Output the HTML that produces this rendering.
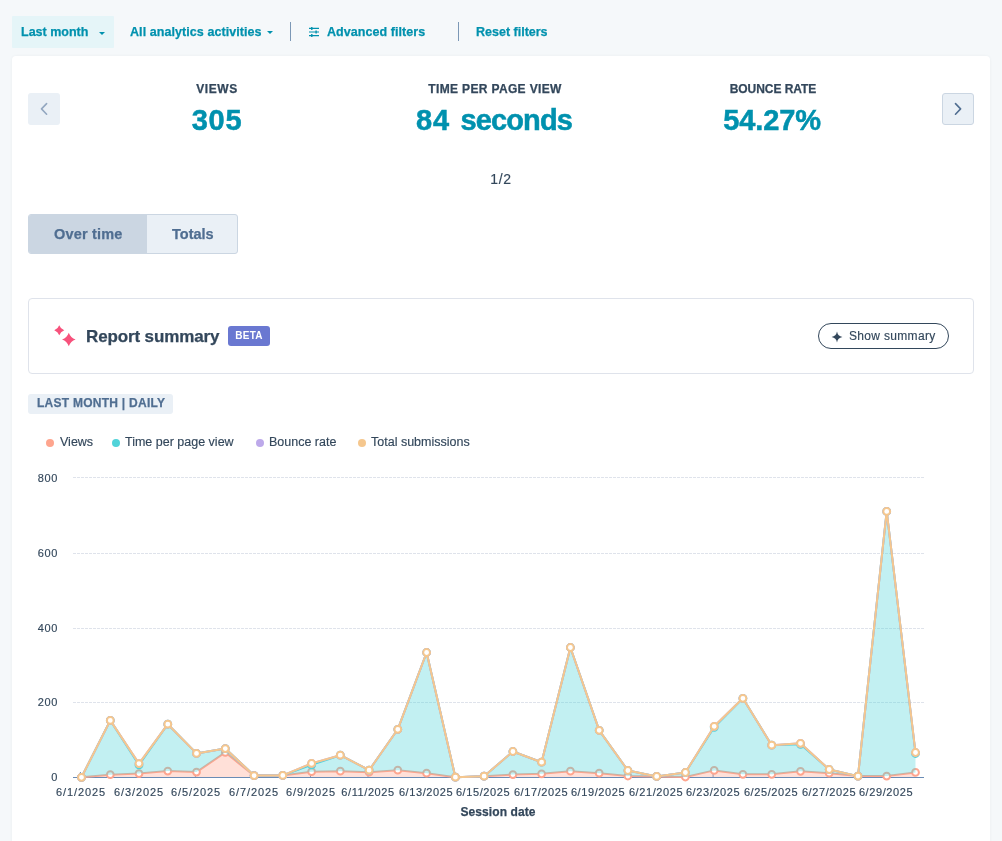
<!DOCTYPE html>
<html><head><meta charset="utf-8"><title>Analytics</title>
<style>
*{box-sizing:border-box;margin:0;padding:0}
html,body{width:1002px;height:841px;overflow:hidden;background:#f5f8fa;font-family:"Liberation Sans",sans-serif;color:#33475b}
.abs{position:absolute;white-space:nowrap}
.abs,.tb,.kl,.kv,.tabt,.beta,.lg,.yl,.xl{will-change:transform}
.tb,.kl,.tabt,#rst,#tagt,#sd{-webkit-text-stroke:.25px currentColor}
.lg,.yl,.xl,#sst,#pg{-webkit-text-stroke:.15px currentColor}
.card{position:absolute;left:12px;top:56px;width:978px;height:800px;background:#fff;border-radius:4px 4px 0 0;box-shadow:0 0 3px rgba(45,62,80,.06)}
.tb{position:absolute;top:22px;height:20px;line-height:20px;font-size:12.5px;font-weight:bold;color:#0091ae;white-space:nowrap}
.lastm{position:absolute;left:12px;top:16px;width:102px;height:32px;background:#e5f5f8;border-radius:1px}
.caret{position:absolute;width:0;height:0;border-left:3.2px solid transparent;border-right:3.2px solid transparent;border-top:3.4px solid #0091ae}
.div{position:absolute;top:22px;width:1px;height:19px;background:#7c98b6}
.kl{position:absolute;top:80px;height:18px;line-height:18px;font-size:12px;font-weight:bold;color:#33475b;text-align:center;width:278px;white-space:nowrap}
.kv{position:absolute;top:99.8px;-webkit-text-stroke:.5px #0091ae;height:40px;line-height:40px;font-size:29px;font-weight:bold;color:#0091ae;text-align:center;width:278px;white-space:nowrap}
.nav{position:absolute;top:93px;width:32px;height:32px;border-radius:3px;background:#eaf0f6}
.tabs{position:absolute;left:28px;top:214px;width:210px;height:40px;border:1px solid #cbd6e2;border-radius:3px;background:#eaf0f6;overflow:hidden}
.tabs .a{position:absolute;left:0;top:0;width:118px;height:38px;background:#cbd6e2}
.tabt{position:absolute;top:224px;height:20px;line-height:20px;font-size:14.5px;font-weight:bold;color:#506e91;white-space:nowrap}
.rs{position:absolute;left:28px;top:298px;width:946px;height:76px;border:1px solid #dfe3eb;border-radius:4px;background:#fff}
.beta{position:absolute;left:228px;top:326px;width:42px;height:20px;border-radius:3px;background:#6a78d1;color:#fff;font-size:10px;font-weight:bold;line-height:20px;text-align:center;letter-spacing:.2px}
.showb{position:absolute;left:818px;top:323px;width:131px;height:26px;border:1px solid #33475b;border-radius:13px;background:#fff}
.tag{position:absolute;left:28px;top:393.5px;width:145px;height:20px;border-radius:3px;background:#eaf0f6}
.lg{position:absolute;top:433px;height:18px;line-height:18px;font-size:12.5px;color:#33475b;white-space:nowrap}
.dot{position:absolute;top:439px;width:8px;height:8px;border-radius:50%}
.yl{position:absolute;left:18.3px;width:40px;height:16px;line-height:16px;text-align:right;font-size:11px;letter-spacing:.6px;color:#33475b}
.xl{position:absolute;top:784px;width:80px;height:16px;line-height:16px;text-align:center;font-size:11px;letter-spacing:.5px;color:#33475b;white-space:nowrap}
.chart{position:absolute;left:0;top:0}
</style></head><body>
<div class="lastm"></div>
<div class="tb" id="t1" style="left:21px">Last month</div>
<div class="caret" style="left:98.8px;top:31.8px"></div>
<div class="tb" id="t2" style="left:130.4px;letter-spacing:.07px">All analytics activities</div>
<div class="caret" style="left:266.8px;top:31px"></div>
<div class="div" style="left:290px"></div>
<svg class="abs" style="left:308px;top:26px" width="12" height="12" viewBox="0 0 12 12"><g stroke="#0091ae" stroke-width="1.2" fill="none"><path d="M1 2.4H11M1 6H11M1 9.6H11"/><path d="M3.8 0.9V3.9M8.1 4.5V7.5M3.8 8.1V11.1" stroke-width="1.4"/></g></svg>
<div class="tb" id="t3" style="left:326.6px;letter-spacing:.06px">Advanced filters</div>
<div class="div" style="left:458px"></div>
<div class="tb" id="t4" style="left:475.7px">Reset filters</div>

<div class="card"></div>

<div class="nav" style="left:28px"></div>
<svg class="abs" style="left:28px;top:93px" width="32" height="32" viewBox="0 0 32 32"><path d="M18.6 10.6L13.5 15.9L18.6 21.2" fill="none" stroke="#93a7c0" stroke-width="1.6" stroke-linecap="round" stroke-linejoin="round"/></svg>
<div class="nav" style="left:942px;border:1px solid #cbd6e2"></div>
<svg class="abs" style="left:942px;top:93px" width="32" height="32" viewBox="0 0 32 32"><path d="M13.5 10.6L18.6 15.9L13.5 21.2" fill="none" stroke="#506e91" stroke-width="1.6" stroke-linecap="round" stroke-linejoin="round"/></svg>

<div class="kl" id="k1" style="left:78.2px;letter-spacing:.55px">VIEWS</div>
<div class="kv" id="v1" style="left:77.9px;letter-spacing:.65px">305</div>
<div class="kl" id="k2" style="left:356.2px;letter-spacing:.35px">TIME PER PAGE VIEW</div>
<div class="kv" id="v2" style="left:355.4px;letter-spacing:0;word-spacing:2.6px"><span id="v2a" style="letter-spacing:.8px">84</span> <span id="v2b" style="letter-spacing:-.9px">seconds</span></div>
<div class="kl" id="k3" style="left:634.3px;letter-spacing:-.05px">BOUNCE RATE</div>
<div class="kv" id="v3" style="left:632.8px;letter-spacing:-.12px">54.27%</div>
<div class="abs" id="pg" style="left:461px;width:80px;text-align:center;top:169px;height:20px;line-height:20px;font-size:14px;letter-spacing:.6px;color:#33475b">1/2</div>

<div class="tabs"><div class="a"></div></div>
<div class="tabt" id="tb1" style="left:53.5px;letter-spacing:.17px">Over time</div>
<div class="tabt" id="tb2" style="left:171.5px">Totals</div>

<div class="rs"></div>
<svg class="abs" style="left:52px;top:322px" width="28" height="28" viewBox="0 0 28 28"><g fill="#f7527c"><path d="M7.25 3.3000000000000007 Q8.55 7.000000000000001 12.25 8.3 Q8.55 9.600000000000001 7.25 13.3 Q5.95 9.600000000000001 2.25 8.3 Q5.95 7.000000000000001 7.25 3.3000000000000007Z"/><path d="M16.8 10.7 Q18.6 15.7 23.6 17.5 Q18.6 19.3 16.8 24.3 Q15.0 19.3 10.0 17.5 Q15.0 15.7 16.8 10.7Z"/></g></svg>
<div class="abs" id="rst" style="left:85.7px;top:325px;height:24px;line-height:24px;font-size:17px;letter-spacing:-.13px;font-weight:bold;color:#33475b">Report summary</div>
<div class="beta">BETA</div>
<div class="showb"></div>
<svg class="abs" style="left:831px;top:331px" width="12" height="12" viewBox="0 0 12 12"><path d="M6 0.6 Q6.8 5.2 11.4 6 Q6.8 6.8 6 11.4 Q5.2 6.8 0.6 6 Q5.2 5.2 6 0.6Z" fill="#33475b"/></svg>
<div class="abs" id="sst" style="left:848.7px;top:327px;height:18px;line-height:18px;font-size:12px;letter-spacing:.32px;color:#33475b">Show summary</div>

<div class="tag"></div>
<div class="abs" id="tagt" style="left:36.5px;top:394px;height:18px;line-height:18px;font-size:12px;letter-spacing:.26px;font-weight:bold;color:#506e91">LAST MONTH | DAILY</div>

<div class="dot" style="left:46px;background:#fea58e"></div><div class="lg" id="l1" style="left:59.5px">Views</div>
<div class="dot" style="left:112px;background:#51d3d9"></div><div class="lg" id="l2" style="left:125px">Time per page view</div>
<div class="dot" style="left:255.5px;background:#bda9ea"></div><div class="lg" id="l3" style="left:269px">Bounce rate</div>
<div class="dot" style="left:357.7px;background:#f5c78e"></div><div class="lg" id="l4" style="left:370.5px">Total submissions</div>

<svg class="chart" width="1002" height="841" viewBox="0 0 1002 841">
<line x1="73" x2="924" y1="477.5" y2="477.5" stroke="#dfe3eb" stroke-width="1" stroke-dasharray="3,1"/>
<line x1="73" x2="924" y1="553.5" y2="553.5" stroke="#dfe3eb" stroke-width="1" stroke-dasharray="3,1"/>
<line x1="73" x2="924" y1="628.5" y2="628.5" stroke="#dfe3eb" stroke-width="1" stroke-dasharray="3,1"/>
<line x1="73" x2="924" y1="702.5" y2="702.5" stroke="#dfe3eb" stroke-width="1" stroke-dasharray="3,1"/>
<line x1="80.4" x2="80.4" y1="772" y2="777.5" stroke="#6a8cb5" stroke-width="1"/>
<line x1="137.9" x2="137.9" y1="772" y2="777.5" stroke="#6a8cb5" stroke-width="1"/>
<line x1="195.4" x2="195.4" y1="772" y2="777.5" stroke="#6a8cb5" stroke-width="1"/>
<line x1="253.0" x2="253.0" y1="772" y2="777.5" stroke="#6a8cb5" stroke-width="1"/>
<line x1="310.5" x2="310.5" y1="772" y2="777.5" stroke="#6a8cb5" stroke-width="1"/>
<line x1="368.0" x2="368.0" y1="772" y2="777.5" stroke="#6a8cb5" stroke-width="1"/>
<line x1="425.5" x2="425.5" y1="772" y2="777.5" stroke="#6a8cb5" stroke-width="1"/>
<line x1="483.0" x2="483.0" y1="772" y2="777.5" stroke="#6a8cb5" stroke-width="1"/>
<line x1="540.5" x2="540.5" y1="772" y2="777.5" stroke="#6a8cb5" stroke-width="1"/>
<line x1="598.1" x2="598.1" y1="772" y2="777.5" stroke="#6a8cb5" stroke-width="1"/>
<line x1="655.6" x2="655.6" y1="772" y2="777.5" stroke="#6a8cb5" stroke-width="1"/>
<line x1="713.1" x2="713.1" y1="772" y2="777.5" stroke="#6a8cb5" stroke-width="1"/>
<line x1="770.6" x2="770.6" y1="772" y2="777.5" stroke="#6a8cb5" stroke-width="1"/>
<line x1="828.1" x2="828.1" y1="772" y2="777.5" stroke="#6a8cb5" stroke-width="1"/>
<line x1="885.6" x2="885.6" y1="772" y2="777.5" stroke="#6a8cb5" stroke-width="1"/>
<line x1="73" x2="924" y1="777.5" y2="777.5" stroke="#6a8cb5" stroke-width="1"/>
<polygon points="81.5,777.3 110.3,774.7 139.0,773.6 167.8,771.1 196.5,772.1 225.3,752.4 254.1,775.6 282.8,775.4 311.6,771.7 340.3,771.2 369.1,772.2 397.8,770.2 426.6,773.2 455.4,777.2 484.1,776.2 512.9,774.6 541.6,773.8 570.4,771.2 599.2,773.2 627.9,776.0 656.7,776.4 685.4,777.0 714.2,770.4 742.9,774.3 771.7,774.3 800.5,771.3 829.2,773.2 858.0,776.1 886.7,776.1 915.5,772.4 915.5,777.0 886.7,777.0 858.0,777.0 829.2,777.0 800.5,777.0 771.7,777.0 742.9,777.0 714.2,777.0 685.4,777.0 656.7,777.0 627.9,777.0 599.2,777.0 570.4,777.0 541.6,777.0 512.9,777.0 484.1,777.0 455.4,777.0 426.6,777.0 397.8,777.0 369.1,777.0 340.3,777.0 311.6,777.0 282.8,777.0 254.1,777.0 225.3,777.0 196.5,777.0 167.8,777.0 139.0,777.0 110.3,777.0 81.5,777.0" fill="#fea58e" fill-opacity="0.35"/>
<polyline points="81.5,777.3 110.3,774.7 139.0,773.6 167.8,771.1 196.5,772.1 225.3,752.4 254.1,775.6 282.8,775.4 311.6,771.7 340.3,771.2 369.1,772.2 397.8,770.2 426.6,773.2 455.4,777.2 484.1,776.2 512.9,774.6 541.6,773.8 570.4,771.2 599.2,773.2 627.9,776.0 656.7,776.4 685.4,777.0 714.2,770.4 742.9,774.3 771.7,774.3 800.5,771.3 829.2,773.2 858.0,776.1 886.7,776.1 915.5,772.4" fill="none" stroke="#fea58e" stroke-width="2" stroke-linejoin="round" stroke-linecap="round"/>
<circle cx="81.5" cy="777.3" r="3.4" fill="#fff" stroke="#fea58e" stroke-width="2"/><circle cx="110.3" cy="774.7" r="3.4" fill="#fff" stroke="#fea58e" stroke-width="2"/><circle cx="139.0" cy="773.6" r="3.4" fill="#fff" stroke="#fea58e" stroke-width="2"/><circle cx="167.8" cy="771.1" r="3.4" fill="#fff" stroke="#fea58e" stroke-width="2"/><circle cx="196.5" cy="772.1" r="3.4" fill="#fff" stroke="#fea58e" stroke-width="2"/><circle cx="225.3" cy="752.4" r="3.4" fill="#fff" stroke="#fea58e" stroke-width="2"/><circle cx="254.1" cy="775.6" r="3.4" fill="#fff" stroke="#fea58e" stroke-width="2"/><circle cx="282.8" cy="775.4" r="3.4" fill="#fff" stroke="#fea58e" stroke-width="2"/><circle cx="311.6" cy="771.7" r="3.4" fill="#fff" stroke="#fea58e" stroke-width="2"/><circle cx="340.3" cy="771.2" r="3.4" fill="#fff" stroke="#fea58e" stroke-width="2"/><circle cx="369.1" cy="772.2" r="3.4" fill="#fff" stroke="#fea58e" stroke-width="2"/><circle cx="397.8" cy="770.2" r="3.4" fill="#fff" stroke="#fea58e" stroke-width="2"/><circle cx="426.6" cy="773.2" r="3.4" fill="#fff" stroke="#fea58e" stroke-width="2"/><circle cx="455.4" cy="777.2" r="3.4" fill="#fff" stroke="#fea58e" stroke-width="2"/><circle cx="484.1" cy="776.2" r="3.4" fill="#fff" stroke="#fea58e" stroke-width="2"/><circle cx="512.9" cy="774.6" r="3.4" fill="#fff" stroke="#fea58e" stroke-width="2"/><circle cx="541.6" cy="773.8" r="3.4" fill="#fff" stroke="#fea58e" stroke-width="2"/><circle cx="570.4" cy="771.2" r="3.4" fill="#fff" stroke="#fea58e" stroke-width="2"/><circle cx="599.2" cy="773.2" r="3.4" fill="#fff" stroke="#fea58e" stroke-width="2"/><circle cx="627.9" cy="776.0" r="3.4" fill="#fff" stroke="#fea58e" stroke-width="2"/><circle cx="656.7" cy="776.4" r="3.4" fill="#fff" stroke="#fea58e" stroke-width="2"/><circle cx="685.4" cy="777.0" r="3.4" fill="#fff" stroke="#fea58e" stroke-width="2"/><circle cx="714.2" cy="770.4" r="3.4" fill="#fff" stroke="#fea58e" stroke-width="2"/><circle cx="742.9" cy="774.3" r="3.4" fill="#fff" stroke="#fea58e" stroke-width="2"/><circle cx="771.7" cy="774.3" r="3.4" fill="#fff" stroke="#fea58e" stroke-width="2"/><circle cx="800.5" cy="771.3" r="3.4" fill="#fff" stroke="#fea58e" stroke-width="2"/><circle cx="829.2" cy="773.2" r="3.4" fill="#fff" stroke="#fea58e" stroke-width="2"/><circle cx="858.0" cy="776.1" r="3.4" fill="#fff" stroke="#fea58e" stroke-width="2"/><circle cx="886.7" cy="776.1" r="3.4" fill="#fff" stroke="#fea58e" stroke-width="2"/><circle cx="915.5" cy="772.4" r="3.4" fill="#fff" stroke="#fea58e" stroke-width="2"/>
<polygon points="81.5,777.3 110.3,720.4 139.0,764.9 167.8,724.2 196.5,753.4 225.3,748.6 254.1,775.6 282.8,775.4 311.6,764.9 340.3,755.2 369.1,770.2 397.8,729.3 426.6,652.5 455.4,777.2 484.1,776.2 512.9,751.5 541.6,762.2 570.4,647.5 599.2,730.3 627.9,770.5 656.7,776.4 685.4,772.5 714.2,727.3 742.9,698.3 771.7,745.2 800.5,744.3 829.2,769.5 858.0,776.1 886.7,511.4 915.5,753.5 915.5,772.4 886.7,776.1 858.0,776.1 829.2,773.2 800.5,771.3 771.7,774.3 742.9,774.3 714.2,770.4 685.4,777.0 656.7,776.4 627.9,776.0 599.2,773.2 570.4,771.2 541.6,773.8 512.9,774.6 484.1,776.2 455.4,777.2 426.6,773.2 397.8,770.2 369.1,772.2 340.3,771.2 311.6,771.7 282.8,775.4 254.1,775.6 225.3,752.4 196.5,772.1 167.8,771.1 139.0,773.6 110.3,774.7 81.5,777.3" fill="#51d3d9" fill-opacity="0.35"/>
<polyline points="81.5,777.3 110.3,720.4 139.0,764.9 167.8,724.2 196.5,753.4 225.3,748.6 254.1,775.6 282.8,775.4 311.6,764.9 340.3,755.2 369.1,770.2 397.8,729.3 426.6,652.5 455.4,777.2 484.1,776.2 512.9,751.5 541.6,762.2 570.4,647.5 599.2,730.3 627.9,770.5 656.7,776.4 685.4,772.5 714.2,727.3 742.9,698.3 771.7,745.2 800.5,744.3 829.2,769.5 858.0,776.1 886.7,511.4 915.5,753.5" fill="none" stroke="#51d3d9" stroke-width="2" stroke-linejoin="round" stroke-linecap="round"/>
<circle cx="81.5" cy="777.3" r="3.4" fill="#fff" stroke="#51d3d9" stroke-width="2"/><circle cx="110.3" cy="720.4" r="3.4" fill="#fff" stroke="#51d3d9" stroke-width="2"/><circle cx="139.0" cy="764.9" r="3.4" fill="#fff" stroke="#51d3d9" stroke-width="2"/><circle cx="167.8" cy="724.2" r="3.4" fill="#fff" stroke="#51d3d9" stroke-width="2"/><circle cx="196.5" cy="753.4" r="3.4" fill="#fff" stroke="#51d3d9" stroke-width="2"/><circle cx="225.3" cy="748.6" r="3.4" fill="#fff" stroke="#51d3d9" stroke-width="2"/><circle cx="254.1" cy="775.6" r="3.4" fill="#fff" stroke="#51d3d9" stroke-width="2"/><circle cx="282.8" cy="775.4" r="3.4" fill="#fff" stroke="#51d3d9" stroke-width="2"/><circle cx="311.6" cy="764.9" r="3.4" fill="#fff" stroke="#51d3d9" stroke-width="2"/><circle cx="340.3" cy="755.2" r="3.4" fill="#fff" stroke="#51d3d9" stroke-width="2"/><circle cx="369.1" cy="770.2" r="3.4" fill="#fff" stroke="#51d3d9" stroke-width="2"/><circle cx="397.8" cy="729.3" r="3.4" fill="#fff" stroke="#51d3d9" stroke-width="2"/><circle cx="426.6" cy="652.5" r="3.4" fill="#fff" stroke="#51d3d9" stroke-width="2"/><circle cx="455.4" cy="777.2" r="3.4" fill="#fff" stroke="#51d3d9" stroke-width="2"/><circle cx="484.1" cy="776.2" r="3.4" fill="#fff" stroke="#51d3d9" stroke-width="2"/><circle cx="512.9" cy="751.5" r="3.4" fill="#fff" stroke="#51d3d9" stroke-width="2"/><circle cx="541.6" cy="762.2" r="3.4" fill="#fff" stroke="#51d3d9" stroke-width="2"/><circle cx="570.4" cy="647.5" r="3.4" fill="#fff" stroke="#51d3d9" stroke-width="2"/><circle cx="599.2" cy="730.3" r="3.4" fill="#fff" stroke="#51d3d9" stroke-width="2"/><circle cx="627.9" cy="770.5" r="3.4" fill="#fff" stroke="#51d3d9" stroke-width="2"/><circle cx="656.7" cy="776.4" r="3.4" fill="#fff" stroke="#51d3d9" stroke-width="2"/><circle cx="685.4" cy="772.5" r="3.4" fill="#fff" stroke="#51d3d9" stroke-width="2"/><circle cx="714.2" cy="727.3" r="3.4" fill="#fff" stroke="#51d3d9" stroke-width="2"/><circle cx="742.9" cy="698.3" r="3.4" fill="#fff" stroke="#51d3d9" stroke-width="2"/><circle cx="771.7" cy="745.2" r="3.4" fill="#fff" stroke="#51d3d9" stroke-width="2"/><circle cx="800.5" cy="744.3" r="3.4" fill="#fff" stroke="#51d3d9" stroke-width="2"/><circle cx="829.2" cy="769.5" r="3.4" fill="#fff" stroke="#51d3d9" stroke-width="2"/><circle cx="858.0" cy="776.1" r="3.4" fill="#fff" stroke="#51d3d9" stroke-width="2"/><circle cx="886.7" cy="511.4" r="3.4" fill="#fff" stroke="#51d3d9" stroke-width="2"/><circle cx="915.5" cy="753.5" r="3.4" fill="#fff" stroke="#51d3d9" stroke-width="2"/>
<polyline points="81.5,777.3 110.3,720.4 139.0,763.6 167.8,724.2 196.5,753.4 225.3,748.6 254.1,775.6 282.8,775.4 311.6,763.4 340.3,755.2 369.1,770.2 397.8,729.3 426.6,652.5 455.4,777.2 484.1,776.2 512.9,751.5 541.6,762.2 570.4,647.5 599.2,730.3 627.9,770.5 656.7,776.4 685.4,772.5 714.2,726.3 742.9,698.3 771.7,745.2 800.5,743.3 829.2,769.5 858.0,776.1 886.7,511.4 915.5,752.5" fill="none" stroke="#bda9ea" stroke-width="2" stroke-linejoin="round" stroke-linecap="round"/>
<circle cx="81.5" cy="777.3" r="3.4" fill="#fff" stroke="#bda9ea" stroke-width="2"/><circle cx="110.3" cy="720.4" r="3.4" fill="#fff" stroke="#bda9ea" stroke-width="2"/><circle cx="139.0" cy="763.6" r="3.4" fill="#fff" stroke="#bda9ea" stroke-width="2"/><circle cx="167.8" cy="724.2" r="3.4" fill="#fff" stroke="#bda9ea" stroke-width="2"/><circle cx="196.5" cy="753.4" r="3.4" fill="#fff" stroke="#bda9ea" stroke-width="2"/><circle cx="225.3" cy="748.6" r="3.4" fill="#fff" stroke="#bda9ea" stroke-width="2"/><circle cx="254.1" cy="775.6" r="3.4" fill="#fff" stroke="#bda9ea" stroke-width="2"/><circle cx="282.8" cy="775.4" r="3.4" fill="#fff" stroke="#bda9ea" stroke-width="2"/><circle cx="311.6" cy="763.4" r="3.4" fill="#fff" stroke="#bda9ea" stroke-width="2"/><circle cx="340.3" cy="755.2" r="3.4" fill="#fff" stroke="#bda9ea" stroke-width="2"/><circle cx="369.1" cy="770.2" r="3.4" fill="#fff" stroke="#bda9ea" stroke-width="2"/><circle cx="397.8" cy="729.3" r="3.4" fill="#fff" stroke="#bda9ea" stroke-width="2"/><circle cx="426.6" cy="652.5" r="3.4" fill="#fff" stroke="#bda9ea" stroke-width="2"/><circle cx="455.4" cy="777.2" r="3.4" fill="#fff" stroke="#bda9ea" stroke-width="2"/><circle cx="484.1" cy="776.2" r="3.4" fill="#fff" stroke="#bda9ea" stroke-width="2"/><circle cx="512.9" cy="751.5" r="3.4" fill="#fff" stroke="#bda9ea" stroke-width="2"/><circle cx="541.6" cy="762.2" r="3.4" fill="#fff" stroke="#bda9ea" stroke-width="2"/><circle cx="570.4" cy="647.5" r="3.4" fill="#fff" stroke="#bda9ea" stroke-width="2"/><circle cx="599.2" cy="730.3" r="3.4" fill="#fff" stroke="#bda9ea" stroke-width="2"/><circle cx="627.9" cy="770.5" r="3.4" fill="#fff" stroke="#bda9ea" stroke-width="2"/><circle cx="656.7" cy="776.4" r="3.4" fill="#fff" stroke="#bda9ea" stroke-width="2"/><circle cx="685.4" cy="772.5" r="3.4" fill="#fff" stroke="#bda9ea" stroke-width="2"/><circle cx="714.2" cy="726.3" r="3.4" fill="#fff" stroke="#bda9ea" stroke-width="2"/><circle cx="742.9" cy="698.3" r="3.4" fill="#fff" stroke="#bda9ea" stroke-width="2"/><circle cx="771.7" cy="745.2" r="3.4" fill="#fff" stroke="#bda9ea" stroke-width="2"/><circle cx="800.5" cy="743.3" r="3.4" fill="#fff" stroke="#bda9ea" stroke-width="2"/><circle cx="829.2" cy="769.5" r="3.4" fill="#fff" stroke="#bda9ea" stroke-width="2"/><circle cx="858.0" cy="776.1" r="3.4" fill="#fff" stroke="#bda9ea" stroke-width="2"/><circle cx="886.7" cy="511.4" r="3.4" fill="#fff" stroke="#bda9ea" stroke-width="2"/><circle cx="915.5" cy="752.5" r="3.4" fill="#fff" stroke="#bda9ea" stroke-width="2"/>
<polyline points="81.5,777.3 110.3,720.4 139.0,763.6 167.8,724.2 196.5,753.4 225.3,748.6 254.1,775.6 282.8,775.4 311.6,763.4 340.3,755.2 369.1,770.2 397.8,729.3 426.6,652.5 455.4,777.2 484.1,776.2 512.9,751.5 541.6,762.2 570.4,647.5 599.2,730.3 627.9,770.5 656.7,776.4 685.4,772.5 714.2,726.3 742.9,698.3 771.7,745.2 800.5,743.3 829.2,769.5 858.0,776.1 886.7,511.4 915.5,752.5" fill="none" stroke="#f5c78e" stroke-width="2" stroke-linejoin="round" stroke-linecap="round"/>
<circle cx="81.5" cy="777.3" r="3.4" fill="#fff" stroke="#f5c78e" stroke-width="2"/><circle cx="110.3" cy="720.4" r="3.4" fill="#fff" stroke="#f5c78e" stroke-width="2"/><circle cx="139.0" cy="763.6" r="3.4" fill="#fff" stroke="#f5c78e" stroke-width="2"/><circle cx="167.8" cy="724.2" r="3.4" fill="#fff" stroke="#f5c78e" stroke-width="2"/><circle cx="196.5" cy="753.4" r="3.4" fill="#fff" stroke="#f5c78e" stroke-width="2"/><circle cx="225.3" cy="748.6" r="3.4" fill="#fff" stroke="#f5c78e" stroke-width="2"/><circle cx="254.1" cy="775.6" r="3.4" fill="#fff" stroke="#f5c78e" stroke-width="2"/><circle cx="282.8" cy="775.4" r="3.4" fill="#fff" stroke="#f5c78e" stroke-width="2"/><circle cx="311.6" cy="763.4" r="3.4" fill="#fff" stroke="#f5c78e" stroke-width="2"/><circle cx="340.3" cy="755.2" r="3.4" fill="#fff" stroke="#f5c78e" stroke-width="2"/><circle cx="369.1" cy="770.2" r="3.4" fill="#fff" stroke="#f5c78e" stroke-width="2"/><circle cx="397.8" cy="729.3" r="3.4" fill="#fff" stroke="#f5c78e" stroke-width="2"/><circle cx="426.6" cy="652.5" r="3.4" fill="#fff" stroke="#f5c78e" stroke-width="2"/><circle cx="455.4" cy="777.2" r="3.4" fill="#fff" stroke="#f5c78e" stroke-width="2"/><circle cx="484.1" cy="776.2" r="3.4" fill="#fff" stroke="#f5c78e" stroke-width="2"/><circle cx="512.9" cy="751.5" r="3.4" fill="#fff" stroke="#f5c78e" stroke-width="2"/><circle cx="541.6" cy="762.2" r="3.4" fill="#fff" stroke="#f5c78e" stroke-width="2"/><circle cx="570.4" cy="647.5" r="3.4" fill="#fff" stroke="#f5c78e" stroke-width="2"/><circle cx="599.2" cy="730.3" r="3.4" fill="#fff" stroke="#f5c78e" stroke-width="2"/><circle cx="627.9" cy="770.5" r="3.4" fill="#fff" stroke="#f5c78e" stroke-width="2"/><circle cx="656.7" cy="776.4" r="3.4" fill="#fff" stroke="#f5c78e" stroke-width="2"/><circle cx="685.4" cy="772.5" r="3.4" fill="#fff" stroke="#f5c78e" stroke-width="2"/><circle cx="714.2" cy="726.3" r="3.4" fill="#fff" stroke="#f5c78e" stroke-width="2"/><circle cx="742.9" cy="698.3" r="3.4" fill="#fff" stroke="#f5c78e" stroke-width="2"/><circle cx="771.7" cy="745.2" r="3.4" fill="#fff" stroke="#f5c78e" stroke-width="2"/><circle cx="800.5" cy="743.3" r="3.4" fill="#fff" stroke="#f5c78e" stroke-width="2"/><circle cx="829.2" cy="769.5" r="3.4" fill="#fff" stroke="#f5c78e" stroke-width="2"/><circle cx="858.0" cy="776.1" r="3.4" fill="#fff" stroke="#f5c78e" stroke-width="2"/><circle cx="886.7" cy="511.4" r="3.4" fill="#fff" stroke="#f5c78e" stroke-width="2"/><circle cx="915.5" cy="752.5" r="3.4" fill="#fff" stroke="#f5c78e" stroke-width="2"/>
</svg>
<div class="yl" style="top:469.5px">800</div><div class="yl" style="top:545.0px">600</div><div class="yl" style="top:620.0px">400</div><div class="yl" style="top:694.0px">200</div><div class="yl" style="top:769.0px">0</div>
<div class="xl" style="left:41.25px;letter-spacing:0.9px">6/1/2025</div>
<div class="xl" style="left:98.77px;letter-spacing:0.9px">6/3/2025</div>
<div class="xl" style="left:156.28px;letter-spacing:0.9px">6/5/2025</div>
<div class="xl" style="left:213.80px;letter-spacing:0.9px">6/7/2025</div>
<div class="xl" style="left:271.32px;letter-spacing:0.9px">6/9/2025</div>
<div class="xl" style="left:328.38px;letter-spacing:0.58px">6/11/2025</div>
<div class="xl" style="left:385.89px;letter-spacing:0.58px">6/13/2025</div>
<div class="xl" style="left:443.41px;letter-spacing:0.58px">6/15/2025</div>
<div class="xl" style="left:500.93px;letter-spacing:0.58px">6/17/2025</div>
<div class="xl" style="left:558.45px;letter-spacing:0.58px">6/19/2025</div>
<div class="xl" style="left:615.96px;letter-spacing:0.58px">6/21/2025</div>
<div class="xl" style="left:673.48px;letter-spacing:0.58px">6/23/2025</div>
<div class="xl" style="left:731.00px;letter-spacing:0.58px">6/25/2025</div>
<div class="xl" style="left:788.51px;letter-spacing:0.58px">6/27/2025</div>
<div class="xl" style="left:846.03px;letter-spacing:0.58px">6/29/2025</div>
<div class="abs" id="sd" style="left:418px;width:160px;text-align:center;top:803px;height:18px;line-height:18px;font-size:12px;letter-spacing:.1px;font-weight:bold;color:#33475b">Session date</div>
</body></html>
